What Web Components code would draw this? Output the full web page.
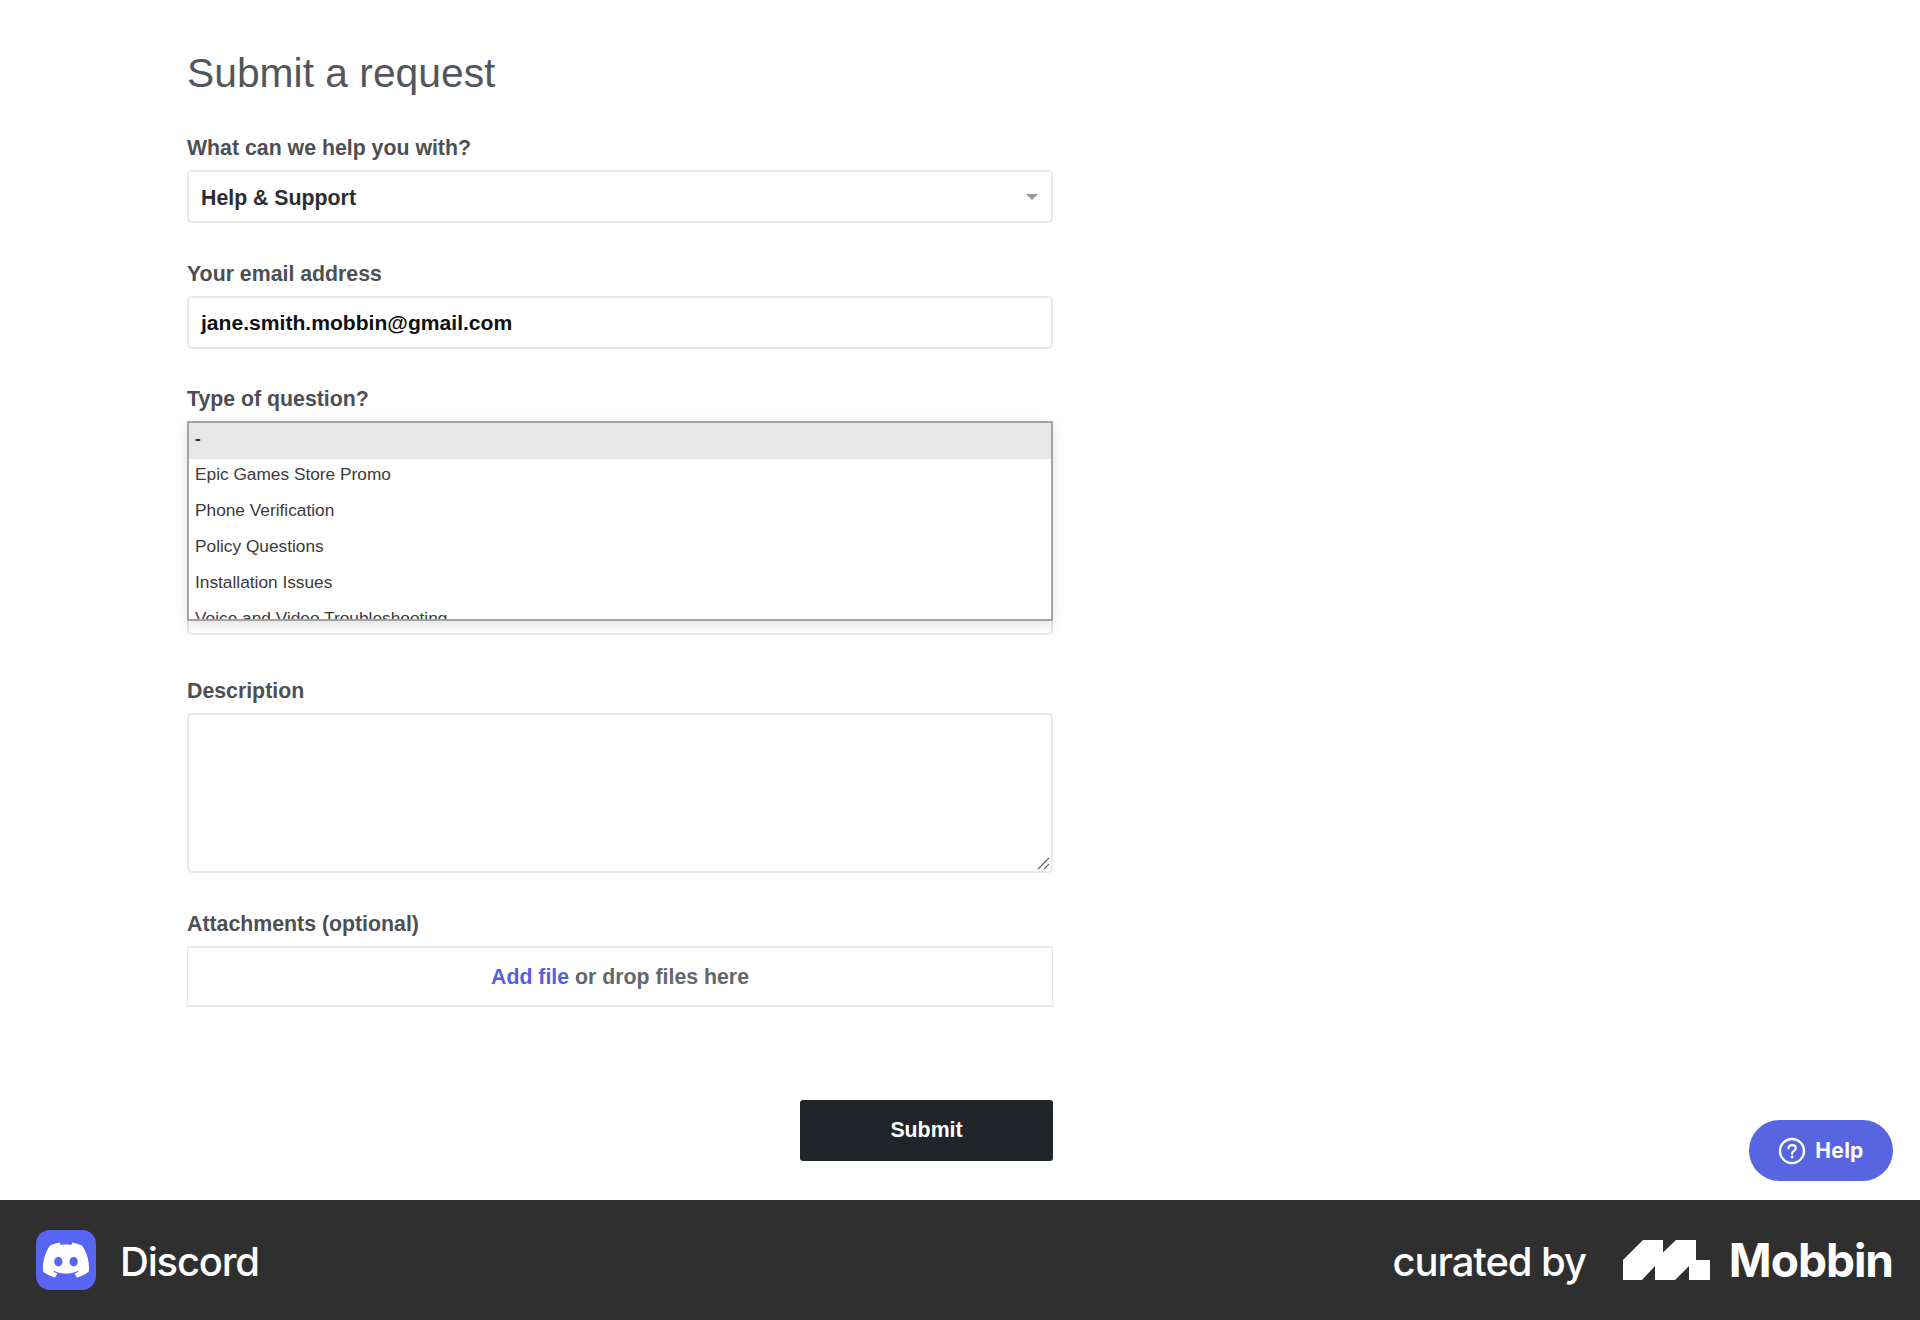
<!DOCTYPE html>
<html lang="en">
<head>
<meta charset="utf-8">
<title>Submit a request</title>
<style>
  html, body { margin: 0; background: #fff; }
  body { font-family: "Liberation Sans", Arial, sans-serif; }
</style>
</head>
<body>
<request-page>
  <h-title>Submit a request</h-title>

  <form-field label="What can we help you with?">
    <select-box>Help &amp; Support</select-box>
  </form-field>

  <form-field label="Your email address">
    <text-box strong>jane.smith.mobbin@gmail.com</text-box>
  </form-field>

  <form-field label="Type of question?">
    <select-box empty>
      <option-list>
        <option-row selected>-</option-row>
        <option-row>Epic Games Store Promo</option-row>
        <option-row>Phone Verification</option-row>
        <option-row>Policy Questions</option-row>
        <option-row>Installation Issues</option-row>
        <option-row>Voice and Video Troubleshooting</option-row>
      </option-list>
    </select-box>
  </form-field>

  <!-- field under the open list, only its bottom edge shows -->
  <form-field style="--label-h: 0px; --label-gap: 0px; margin-top: 108px; margin-bottom: 44px">
    <text-box></text-box>
  </form-field>

  <form-field label="Description">
    <text-box area></text-box>
  </form-field>

  <form-field label="Attachments (optional)" style="margin-bottom: 93px">
    <drop-zone><a slot="link">Add file</a> or drop files here</drop-zone>
  </form-field>

  <submit-row>Submit</submit-row>

  <help-button slot="overlay">Help</help-button>
  <brand-footer slot="footer"></brand-footer>
</request-page>

<script>
class RequestPage extends HTMLElement {
  constructor() {
    super();
    this.attachShadow({ mode: "open" });
    this.shadowRoot.innerHTML = `
      <style>
        :host { display: flex; flex-direction: column; height: 1320px; position: relative; overflow: hidden; }
        main { flex: 1; padding: 0 867px 0 187px; }
      </style>
      <main><slot></slot></main>
      <slot name="overlay"></slot>
      <slot name="footer"></slot>
    `;
  }
}

class HTitle extends HTMLElement {
  constructor() {
    super();
    this.attachShadow({ mode: "open" });
    this.shadowRoot.innerHTML = `
      <style>
        :host { display: block; padding-top: 46px; height: 44px; margin-bottom: 46px;
          font-size: 40.8px; line-height: 54px; color: #53565a; white-space: nowrap; }
      </style>
      <slot></slot>
    `;
  }
}

class FormField extends HTMLElement {
  constructor() {
    super();
    this.attachShadow({ mode: "open" });
    this.shadowRoot.innerHTML = `
      <style>
        :host { display: block; margin-bottom: 38.5px; }
        label { display: block; height: var(--label-h, 24px); margin-bottom: var(--label-gap, 10px);
          font-size: 21.3px; line-height: 24px; font-weight: 700; color: #4c4f53; white-space: nowrap; }
      </style>
      <label></label>
      <slot></slot>
    `;
  }

  connectedCallback() {
    this.shadowRoot.querySelector("label").textContent = this.getAttribute("label") || "";
  }
}

class SelectBox extends HTMLElement {
  constructor() {
    super();
    this.attachShadow({ mode: "open" });
    this.shadowRoot.innerHTML = `
      <style>
        :host { display: flex; align-items: center; position: relative; box-sizing: border-box; height: 53px;
          padding: 3px 12px 0; border: 2px solid #e8e8e8; border-radius: 5px; background: #fff;
          font-size: 21.3px; font-weight: 700; color: #2b2e31; white-space: nowrap; }
        i { position: absolute; right: 13px; top: 22px; width: 0; height: 0;
          border: 6px solid transparent; border-top: 6px solid #999; border-bottom: 0; }
      </style>
      <slot></slot>
      <i></i>
    `;
  }
}

class TextBox extends HTMLElement {
  constructor() {
    super();
    this.attachShadow({ mode: "open" });
    this.shadowRoot.innerHTML = `
      <style>
        :host { display: flex; align-items: center; position: relative; box-sizing: border-box; height: 53px;
          padding: 2px 12px 0; border: 2px solid #e8e8e8; border-radius: 5px; background: #fff;
          font-size: 21.1px; font-weight: 700; color: #0f1012; white-space: nowrap; }
        :host([area]) { height: 160px; }
        svg { display: none; position: absolute; right: 1px; bottom: 1px; }
        :host([area]) svg { display: block; }
      </style>
      <slot></slot>
      <svg width="13" height="13" viewBox="0 0 13 13" fill="none" stroke="#666" stroke-width="1.2">
        <path d="M1 12 12 1M7 12 12 7"/>
      </svg>
    `;
  }
}

class OptionList extends HTMLElement {
  constructor() {
    super();
    this.attachShadow({ mode: "open" });
    this.shadowRoot.innerHTML = `
      <style>
        :host { display: block; position: absolute; z-index: 5; left: -2px; top: -2px; right: -2px; height: 200px;
          box-sizing: border-box; overflow: hidden; border: 2px solid #a3a3a3; background: #fff;
          box-shadow: 0 4px 12px rgba(0, 0, 0, 0.12); }
      </style>
      <slot></slot>
    `;
  }
}

class OptionRow extends HTMLElement {
  constructor() {
    super();
    this.attachShadow({ mode: "open" });
    this.shadowRoot.innerHTML = `
      <style>
        :host { display: block; box-sizing: border-box; height: 36px; padding: 0 6px;
          font-size: 17.3px; font-weight: 400; line-height: 31px; color: #3a3a3a; white-space: nowrap; }
        :host([selected]) { background: #e8e8e8; font-weight: 700; color: #2b2e31; }
      </style>
      <slot></slot>
    `;
  }
}

class DropZone extends HTMLElement {
  constructor() {
    super();
    this.attachShadow({ mode: "open" });
    this.shadowRoot.innerHTML = `
      <style>
        :host { display: block; box-sizing: border-box; height: 61px; border: 2px solid #e8e8e8; border-left-width: 1px; border-right-width: 1px;
          text-align: center; font-size: 21.3px; font-weight: 700; line-height: 59px; color: #63666a; white-space: nowrap; }
        ::slotted(a) { color: #5660db; }
      </style>
      <slot name="link"></slot>
      <slot></slot>
    `;
  }
}

class SubmitRow extends HTMLElement {
  constructor() {
    super();
    this.attachShadow({ mode: "open" });
    this.shadowRoot.innerHTML = `
      <style>
        :host { display: flex; justify-content: flex-end; }
        button { width: 253px; height: 61px; padding: 0; border: 0; border-radius: 3px; background: #212529;
          color: #fff; font: 700 21.3px "Liberation Sans", Arial, sans-serif; }
      </style>
      <button><slot></slot></button>
    `;
  }
}

class HelpButton extends HTMLElement {
  constructor() {
    super();
    this.attachShadow({ mode: "open" });
    this.shadowRoot.innerHTML = `
      <style>
        :host { position: absolute; left: 1749px; top: 1120px; width: 144px; height: 61px; box-sizing: border-box;
          display: flex; align-items: center; justify-content: center; gap: 9px; border-radius: 31px;
          background: #5865e0; color: #fff; font: 700 21px "Inter", "Liberation Sans", sans-serif; letter-spacing: 0.3px; }
      </style>
      <svg width="28" height="28" viewBox="0 0 28 28" fill="none">
        <circle cx="14" cy="14" r="12" stroke="#fff" stroke-width="2.4"/>
        <path d="M10.4 11.2c.3-2 1.8-3 3.7-3 2.1 0 3.6 1.2 3.6 3 0 1.500-1 2.200-2 2.900-1 .7-1.600 1.200-1.600 2.600" stroke="#fff" stroke-width="2.200" stroke-linecap="round"/>
        <circle cx="14.100" cy="20" r="1.400" fill="#fff"/>
      </svg>
      <slot></slot>
    `;
  }
}

class BrandFooter extends HTMLElement {
  constructor() {
    super();
    this.attachShadow({ mode: "open" });
    this.shadowRoot.innerHTML = `
      <style>
        :host { display: flex; align-items: center; justify-content: space-between; height: 120px; flex: none;
          padding: 0 27px 0 36px; background: #2f2f2f; color: #fff; font-family: "Inter", "Liberation Sans", sans-serif; }
        div { display: flex; align-items: center; }
        .app-icon { width: 60px; height: 60px; border-radius: 14px; background: #5865f2; justify-content: center; margin-right: 24px; }
        .app-name { font-size: 40px; font-weight: 500; letter-spacing: -1.2px; padding-top: 2px; }
        .curated { font-size: 40px; font-weight: 500; letter-spacing: -1.1px; margin-right: 37px; padding-top: 2px; }
        .mobbin { font-size: 46px; font-weight: 700; letter-spacing: -1px; margin-left: 19px; }
      </style>
      <div>
        <div class="app-icon">
          <svg width="46" height="46" viewBox="0 0 24 24" fill="#fff"><path d="M20.317 4.3698a19.7913 19.7913 0 00-4.8851-1.5152.0741.0741 0 00-.0785.0371c-.211.3753-.4447.8648-.6083 1.2495-1.8447-.2762-3.68-.2762-5.4868 0-.1636-.3933-.4058-.8742-.6177-1.2495a.077.077 0 00-.0785-.037 19.7363 19.7363 0 00-4.8852 1.515.0699.0699 0 00-.0321.0277C.5334 9.0458-.319 13.5799.0992 18.0578a.0824.0824 0 00.0312.0561c2.0528 1.5076 4.0413 2.4228 5.9929 3.0294a.0777.0777 0 00.0842-.0276c.4616-.6304.8731-1.2952 1.226-1.9942a.076.076 0 00-.0416-.1057c-.6528-.2476-1.2743-.5495-1.8722-.8923a.077.077 0 01-.0076-.1277c.1258-.0943.2517-.1923.3718-.2914a.0743.0743 0 01.0776-.0105c3.9278 1.7933 8.18 1.7933 12.0614 0a.0739.0739 0 01.0785.0095c.1202.099.246.1981.3728.2924a.077.077 0 01-.0066.1276 12.2986 12.2986 0 01-1.873.8914.0766.0766 0 00-.0407.1067c.3604.698.7719 1.3628 1.225 1.9932a.076.076 0 00.0842.0286c1.961-.6067 3.9495-1.5219 6.0023-3.0294a.077.077 0 00.0313-.0552c.5004-5.177-.8382-9.6739-3.5485-13.6604a.061.061 0 00-.0312-.0286zM8.02 15.3312c-1.1825 0-2.1569-1.0857-2.1569-2.419 0-1.3332.9555-2.4189 2.157-2.4189 1.2108 0 2.1757 1.0952 2.1568 2.419 0 1.3332-.9555 2.4189-2.1569 2.4189zm7.9748 0c-1.1825 0-2.1569-1.0857-2.1569-2.419 0-1.3332.9554-2.4189 2.1569-2.4189 1.2108 0 2.1757 1.0952 2.1568 2.419 0 1.3332-.946 2.4189-2.1568 2.4189Z"/></svg>
        </div>
        <span class="app-name">Discord</span>
      </div>
      <div>
        <span class="curated">curated by</span>
        <svg width="87" height="40" viewBox="0 0 87 40" fill="#fff"><path d="M0 20 20 0H40V12.500L53 0H73V20H87V40H66V26L52 40H32V26L19 40H0Z"/></svg>
        <span class="mobbin">Mobbin</span>
      </div>
    `;
  }
}

customElements.define("request-page", RequestPage);
customElements.define("h-title", HTitle);
customElements.define("form-field", FormField);
customElements.define("select-box", SelectBox);
customElements.define("text-box", TextBox);
customElements.define("option-list", OptionList);
customElements.define("option-row", OptionRow);
customElements.define("drop-zone", DropZone);
customElements.define("submit-row", SubmitRow);
customElements.define("help-button", HelpButton);
customElements.define("brand-footer", BrandFooter);
</script>
</body>
</html>
